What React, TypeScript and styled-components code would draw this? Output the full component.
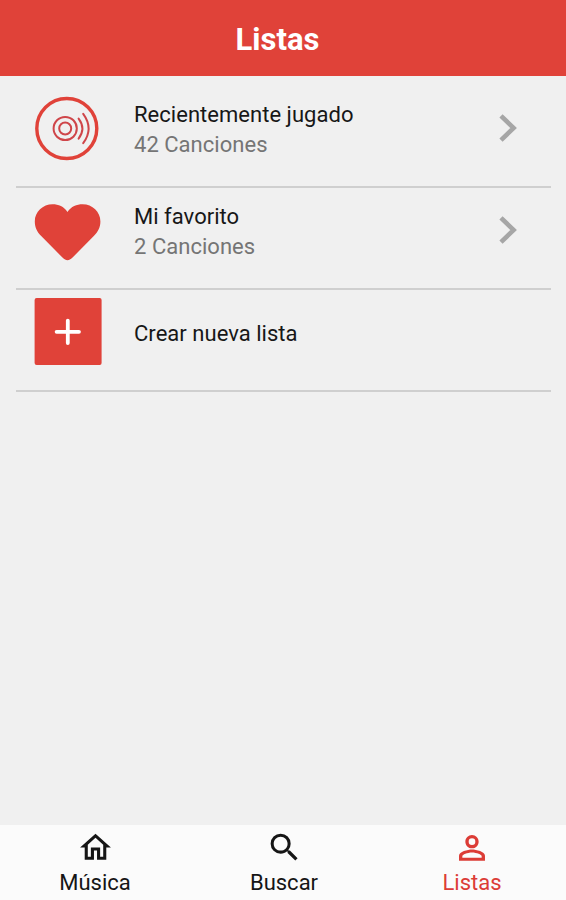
import React from "react";
import styled, { createGlobalStyle } from "styled-components";

const RED = "#e04239";

const GlobalStyle = createGlobalStyle`
  * { box-sizing: border-box; }
  body { margin: 0; background: #f0f0f0; font-family: Roboto, sans-serif; }
`;

const Screen = styled.div`
  display: flex;
  flex-direction: column;
  width: 100%;
  height: 100vh;
  background: #f0f0f0;
`;

const Header = styled.header`
  flex: none;
  display: flex;
  align-items: center;
  justify-content: center;
  height: 76px;
  padding: 4px 11px 0 0;
  background: ${RED};
`;

const Title = styled.h1`
  margin: 0;
  font-size: 31px;
  line-height: 36px;
  font-weight: 700;
  color: #fff;
`;

const Playlists = styled.main`
  flex: 1;
  padding: 10px 15px 0 16px;
`;

const Row = styled.div`
  display: flex;
  align-items: flex-start;
  height: 102px;
  padding: 8px 32px 0 18px;
  border-bottom: 2px solid #cfcfcf;
`;

const Artwork = styled.div`
  flex: none;
  width: 68px;
  height: 70px;
  margin-right: 32px;
  svg { display: block; }
`;

const Info = styled.div`
  flex: 1;
  display: flex;
  flex-direction: column;
  justify-content: center;
  height: 72px;
`;

const Name = styled.span`
  font-size: 22px;
  line-height: 30px;
  letter-spacing: 0.03px;
  color: #171717;
`;

const Count = styled(Name)`
  color: #757575;
`;

const Arrow = styled.svg`
  flex: none;
  width: 20px;
  height: 30px;
  margin-top: 19px;
`;

const TabBar = styled.nav`
  flex: none;
  display: grid;
  grid-template-columns: 190px 188px 188px;
  height: 75px;
  background: #fbfbfb;
`;

const Tab = styled.div<{ $active?: boolean }>`
  display: flex;
  flex-direction: column;
  align-items: center;
  padding-top: 4px;
  color: ${(p) => (p.$active ? "#dc3c36" : "#151515")};
`;

const TabIcon = styled.svg<{ $size: number }>`
  width: ${(p) => p.$size}px;
  height: ${(p) => p.$size}px;
  flex: none;
  margin-bottom: ${(p) => 40 - p.$size}px;
  fill: currentColor;
`;

const TabLabel = styled.span`
  font-size: 22px;
  line-height: 28px;
`;

const Disc = () => (
  <svg width="68" height="70" viewBox="0 0 68 70" fill="none" stroke={RED}>
    <circle cx="32.8" cy="34.5" r="30" strokeWidth="3.4" />
    <g stroke="#cf4549" strokeWidth="2">
      <circle cx="31.2" cy="34.5" r="11.6" />
      <circle cx="31.2" cy="34.5" r="6" />
      <path d="M44.6 24.6Q52.2 34.5 44.6 44.6" strokeLinecap="round" />
      <path d="M49.2 19.8Q60 34.5 49.2 49.2" strokeLinecap="round" />
    </g>
  </svg>
);

const Heart = () => (
  <svg width="68" height="70" viewBox="0 0 68 70" fill={RED}>
    <path d="M33.5 16C29.8 10.5 24.6 8.3 18.6 8.3C8.8 8.3.8 15.8.8 25.4C.8 31.5 3.2 36 7.2 40L28.7 61.8C31.8 64.9 35.2 64.9 38.3 61.8L59.8 40C63.8 36 66.4 31.5 66.4 25.4C66.4 15.8 58.4 8.3 48.6 8.3C42.6 8.3 37.2 10.5 33.5 16Z" />
  </svg>
);

const Add = () => (
  <svg width="68" height="70" viewBox="0 0 68 70">
    <rect x=".6" y="0" width="67" height="67" rx="2" fill={RED} />
    <path
      d="M33.8 22.6V45M22.6 33.8H45"
      stroke="#fff"
      strokeWidth="3.8"
      strokeLinecap="round"
    />
  </svg>
);

const Chevron = () => (
  <Arrow viewBox="0 0 20 30" fill="none">
    <path d="M2 2.8L14.6 15L2 27.2" stroke="#a6a6a6" strokeWidth="4.6" />
  </Arrow>
);

const playlists = [
  { name: "Recientemente jugado", count: "42 Canciones", icon: <Disc /> },
  { name: "Mi favorito", count: "2 Canciones", icon: <Heart /> },
  { name: "Crear nueva lista", icon: <Add /> },
];

const tabs = [
  {
    label: "Música",
    size: 37,
    path: "M12 5.69l5 4.5V18h-2v-6H9v6H7v-7.81l5-4.5M12 3L2 12h3v8h6v-6h2v6h6v-8h3L12 3z",
  },
  {
    label: "Buscar",
    size: 37,
    path: "M15.5 14h-.79l-.28-.27A6.471 6.471 0 0 0 16 9.5 6.5 6.5 0 1 0 9.5 16c1.61 0 3.09-.59 4.23-1.57l.27.28v.79l5 4.99L20.49 19l-4.99-5zm-6 0C7.01 14 5 11.99 5 9.5S7.01 5 9.5 5 14 7.01 14 9.5 11.99 14 9.5 14z",
  },
  {
    label: "Listas",
    size: 38,
    active: true,
    path: "M12 5.9a2.1 2.1 0 1 1 0 4.2 2.1 2.1 0 0 1 0-4.2m0 9c2.97 0 6.1 1.46 6.1 2.1v1.1H5.9V17c0-.64 3.13-2.1 6.1-2.1M12 3.8C9.68 3.8 7.8 5.68 7.8 8s1.88 4.2 4.2 4.2 4.2-1.88 4.2-4.2-1.88-4.2-4.2-4.2zm0 9.1c-2.67 0-8.2 1.34-8.2 4v3.2h16.4v-3.2c0-2.66-5.53-4-8.2-4z",
  },
];

export default function App() {
  return (
    <Screen>
      <GlobalStyle />
      <Header>
        <Title>Listas</Title>
      </Header>
      <Playlists>
        {playlists.map((item) => (
          <Row key={item.name}>
            <Artwork>{item.icon}</Artwork>
            <Info>
              <Name>{item.name}</Name>
              {item.count && <Count>{item.count}</Count>}
            </Info>
            {item.count && <Chevron />}
          </Row>
        ))}
      </Playlists>
      <TabBar>
        {tabs.map((tab) => (
          <Tab key={tab.label} $active={tab.active}>
            <TabIcon $size={tab.size} viewBox="0 0 24 24">
              <path d={tab.path} />
            </TabIcon>
            <TabLabel>{tab.label}</TabLabel>
          </Tab>
        ))}
      </TabBar>
    </Screen>
  );
}
